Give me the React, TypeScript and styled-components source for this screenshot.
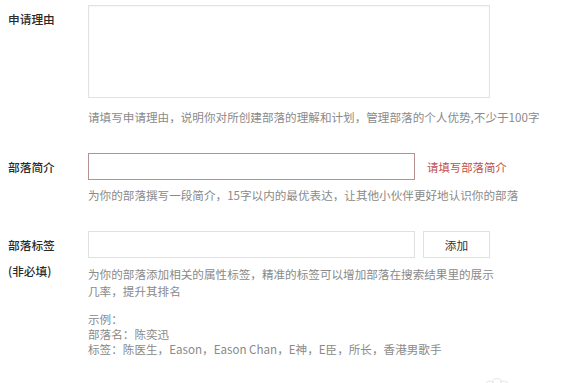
import React from "react";
import styled, { createGlobalStyle } from "styled-components";

const Global = createGlobalStyle`
  html, body { margin: 0; padding: 0; background: #fff; }
  body {
    font-family: "Noto Sans CJK SC", "Microsoft YaHei", sans-serif;
    color: #333;
    width: 579px;
    height: 383px;
    overflow: hidden;
  }
`;

const Page = styled.div`
  position: relative;
  width: 579px;
  height: 383px;
  padding-left: 8px;
  box-sizing: border-box;
`;

const Row = styled.div<{ $top: number }>`
  display: grid;
  grid-template-columns: 80px 1fr;
  margin-top: ${(p) => p.$top}px;
`;

const LabelCol = styled.div<{ $pad: number }>`
  display: flex;
  flex-direction: column;
  padding-top: ${(p) => p.$pad}px;
`;

const Label = styled.div<{ $h?: number }>`
  font-size: 11.7px;
  line-height: ${(p) => p.$h ?? 16}px;
  height: ${(p) => p.$h ?? 16}px;
  color: #2a2a2a;
  font-weight: 500;
`;

const SubLabel = styled.div`
  margin-top: 5px;
  font-size: 11.7px;
  line-height: 16px;
  color: #2a2a2a;
  font-weight: 500;
`;

const Field = styled.div`
  display: flex;
  flex-direction: column;
`;

const TextArea = styled.div`
  width: 402px;
  height: 93px;
  box-sizing: border-box;
  border: 1px solid #e2e2e2;
  box-shadow: inset 0 1px 2px rgba(0, 0, 0, 0.04);
  background: #fff;
`;

const InputLine = styled.div`
  display: flex;
  align-items: center;
`;

const Input = styled.div<{ $error?: boolean }>`
  width: 327px;
  height: 27px;
  box-sizing: border-box;
  border: 1px solid ${(p) => (p.$error ? "#b89090" : "#e0e0e0")};
  background: #fff;
`;

const ErrorText = styled.span`
  margin-left: 12px;
  font-size: 11.4px;
  line-height: 16px;
  color: #c0504d;
`;

const Button = styled.div`
  margin-left: 8px;
  width: 67px;
  height: 27px;
  box-sizing: border-box;
  border: 1px solid #e0e0e0;
  background: #fff;
  display: flex;
  align-items: center;
  justify-content: center;
  font-size: 11.7px;
  color: #333;
`;

const Hint = styled.div<{ $top: number; $lh?: number }>`
  margin-top: ${(p) => p.$top}px;
  font-size: 11.6px;
  line-height: ${(p) => p.$lh ?? 16}px;
  color: #8a8a8a;
  white-space: nowrap;
`;

const Example = styled.div`
  margin-top: 12px;
  font-size: 11.6px;
  line-height: 15px;
  color: #8a8a8a;
  white-space: nowrap;
`;

const Watermark = styled.svg`
  position: absolute;
  left: 478px;
  top: 368px;
`;

export default function App() {
  return (
    <Page>
      <Global />
      <Row $top={5}>
        <LabelCol $pad={6}>
          <Label>申请理由</Label>
        </LabelCol>
        <Field>
          <TextArea />
          <Hint $top={11}>
            请填写申请理由，说明你对所创建部落的理解和计划，管理部落的个人优势,不少于100字
          </Hint>
        </Field>
      </Row>

      <Row $top={28}>
        <LabelCol $pad={0}>
          <Label $h={27}>部落简介</Label>
        </LabelCol>
        <Field>
          <InputLine>
            <Input $error />
            <ErrorText>请填写部落简介</ErrorText>
          </InputLine>
          <Hint $top={7}>
            为你的部落撰写一段简介，15字以内的最优表达，让其他小伙伴更好地认识你的部落
          </Hint>
        </Field>
      </Row>

      <Row $top={28}>
        <LabelCol $pad={0}>
          <Label $h={27}>部落标签</Label>
          <SubLabel>(非必填)</SubLabel>
        </LabelCol>
        <Field>
          <InputLine>
            <Input />
            <Button>添加</Button>
          </InputLine>
          <Hint $top={8} $lh={17}>
            为你的部落添加相关的属性标签，精准的标签可以增加部落在搜索结果里的展示
            <br />
            几率，提升其排名
          </Hint>
          <Example>
            示例：
            <br />
            部落名：陈奕迅
            <br />
            标签：陈医生，Eason，Eason Chan，E神，E臣，所长，香港男歌手
          </Example>
        </Field>
      </Row>

      <Watermark width="40" height="16" viewBox="0 0 40 16">
        <g fill="none" stroke="#e6e6e6" strokeWidth="1.2">
          <circle cx="12" cy="12" r="4" />
          <circle cx="19" cy="10" r="4.5" />
          <circle cx="26" cy="12" r="4" />
          <path d="M4 15 Q8 9 12 12" />
        </g>
      </Watermark>
    </Page>
  );
}
